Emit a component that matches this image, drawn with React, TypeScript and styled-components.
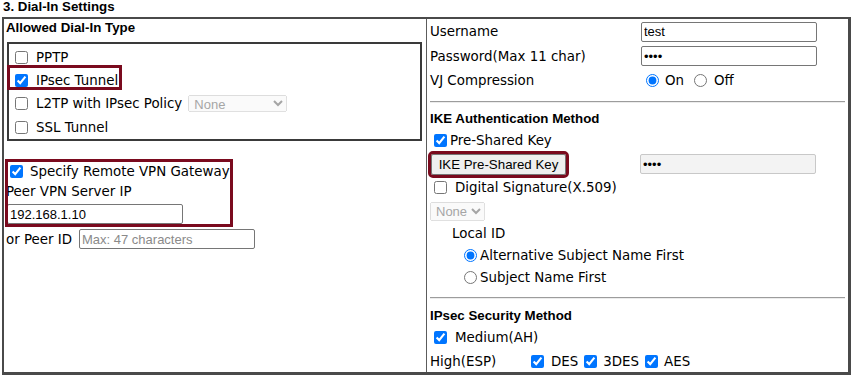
import React from 'react';
import styled, { createGlobalStyle } from 'styled-components';

const maroon = '#7a0a1e';

const GlobalStyle = createGlobalStyle`
  html, body { margin: 0; background: #fff; }
  body {
    padding: 0 2px;
    font-family: "DejaVu Sans", Verdana, sans-serif;
    font-size: 13.4px;
    color: #000;
  }
`;

const App = () => {
  return (
    <>
      <GlobalStyle />
      <Title>3. Dial-In Settings</Title>
      <Panel>
        <LeftCell>
          <Heading $indent={1}>Allowed Dial-In Type</Heading>
          <TypeBox>
            <TypeRow $h={23}>
              <CheckLabel $gap={8}>
                <Check type="checkbox" />
                PPTP
              </CheckLabel>
            </TypeRow>
            <TypeRow $h={23}>
              <Marked $gap={8}>
                <Check type="checkbox" defaultChecked />
                IPsec Tunnel
              </Marked>
            </TypeRow>
            <TypeRow $h={23}>
              <CheckLabel $gap={8}>
                <Check type="checkbox" />
                L2TP with IPsec Policy
              </CheckLabel>
              <Dropdown disabled $width={99} $height={17} $left={6}>
                <option>None</option>
              </Dropdown>
            </TypeRow>
            <TypeRow $h={24}>
              <CheckLabel $gap={8}>
                <Check type="checkbox" />
                SSL Tunnel
              </CheckLabel>
            </TypeRow>
          </TypeBox>

          <GatewayBox>
            <GatewayRow>
              <CheckLabel $gap={7}>
                <Check type="checkbox" defaultChecked />
                Specify Remote VPN Gateway
              </CheckLabel>
            </GatewayRow>
            <PlainLine $indent={1}>Peer VPN Server IP</PlainLine>
            <TextInput defaultValue="192.168.1.10" $left={2} $top={3} />
          </GatewayBox>

          <PeerRow>
            <PeerLabel>or Peer ID</PeerLabel>
            <TextInput placeholder="Max: 47 characters" />
          </PeerRow>
        </LeftCell>

        <RightCell>
          <FieldRow $h={24}>
            <span>Username</span>
            <TextInput defaultValue="test" />
          </FieldRow>
          <FieldRow $h={25}>
            <span>Password(Max 11 char)</span>
            <TextInput type="password" defaultValue="abcd" />
          </FieldRow>
          <FieldRow $h={24}>
            <span>VJ Compression</span>
            <RadioGroup>
              <RadioLabel $gap={6} $left={5}>
                <Radio type="radio" name="vj" defaultChecked />
                On
              </RadioLabel>
              <RadioLabel $gap={7} $left={10}>
                <Radio type="radio" name="vj" />
                Off
              </RadioLabel>
            </RadioGroup>
          </FieldRow>

          <Divider $top={9} />
          <Heading $top={8}>IKE Authentication Method</Heading>
          <CheckRow $h={26}>
            <CheckLabel $gap={3} $left={4}>
              <Check type="checkbox" defaultChecked />
              Pre-Shared Key
            </CheckLabel>
          </CheckRow>
          <KeyRow>
            <KeyButton type="button">IKE Pre-Shared Key</KeyButton>
            <LockedInput type="password" defaultValue="abcd" readOnly />
          </KeyRow>
          <CheckRow $h={26}>
            <CheckLabel $gap={8} $left={4}>
              <Check type="checkbox" />
              Digital Signature(X.509)
            </CheckLabel>
          </CheckRow>
          <Dropdown disabled $width={55} $height={19} $top={1}>
            <option>None</option>
          </Dropdown>
          <PlainLine $indent={22} $top={3}>Local ID</PlainLine>
          <CheckRow $h={23}>
            <RadioLabel $gap={3} $left={34}>
              <Radio type="radio" name="localid" defaultChecked />
              Alternative Subject Name First
            </RadioLabel>
          </CheckRow>
          <CheckRow $h={23}>
            <RadioLabel $gap={3} $left={34}>
              <Radio type="radio" name="localid" />
              Subject Name First
            </RadioLabel>
          </CheckRow>

          <Divider $top={8} />
          <Heading $top={9}>IPsec Security Method</Heading>
          <CheckRow $h={26}>
            <CheckLabel $gap={8} $left={4}>
              <Check type="checkbox" defaultChecked />
              Medium(AH)
            </CheckLabel>
          </CheckRow>
          <CipherRow>
            <span>High(ESP)</span>
            <CipherList>
              <CheckLabel $gap={7}>
                <Check type="checkbox" defaultChecked />
                DES
              </CheckLabel>
              <CheckLabel $gap={6} $left={6}>
                <Check type="checkbox" defaultChecked />
                3DES
              </CheckLabel>
              <CheckLabel $gap={6} $left={6}>
                <Check type="checkbox" defaultChecked />
                AES
              </CheckLabel>
            </CipherList>
          </CipherRow>
        </RightCell>
      </Panel>
    </>
  );
};

export default App;

const Title = styled.div`
  font: bold 13.3px/13px "Liberation Sans", Arial, sans-serif;
  height: 17px;
  padding-left: 1px;
`;

const Panel = styled.div`
  display: grid;
  grid-template-columns: 423px 1fr;
  grid-template-rows: minmax(0, 1fr);
  width: 849px;
  height: 358px;
  box-sizing: border-box;
  border-style: solid;
  border-color: #4a4a4a;
  border-width: 2px 3px 3px 2px;
`;

const LeftCell = styled.div`
  border-right: 1px solid #5c5c5c;
  padding: 1px 0 0 1px;
`;

const RightCell = styled.div`
  display: flex;
  flex-direction: column;
  align-items: flex-start;
  padding: 1px 3px 0 3px;
`;

const Heading = styled.div<{ $top?: number; $indent?: number }>`
  font: bold 13.3px/16px "Liberation Sans", Arial, sans-serif;
  margin-top: ${(p) => p.$top ?? 0}px;
  padding-left: ${(p) => p.$indent ?? 0}px;
`;

const TypeBox = styled.div`
  display: flex;
  flex-direction: column;
  width: 415px;
  height: 99px;
  box-sizing: border-box;
  margin: 6px 0 0 2px;
  padding-top: 2px;
  border: 2px solid #3a3a3a;
`;

const TypeRow = styled.div<{ $h: number }>`
  display: flex;
  align-items: center;
  flex-shrink: 0;
  height: ${(p) => p.$h}px;
  padding-left: 6px;
`;

const CheckLabel = styled.label<{ $gap: number; $left?: number }>`
  display: inline-flex;
  align-items: center;
  gap: ${(p) => p.$gap}px;
  margin-left: ${(p) => p.$left ?? 0}px;
  white-space: nowrap;
`;

const Marked = styled(CheckLabel)`
  height: 19px;
  box-sizing: border-box;
  margin: -6px 0 0 -5px;
  padding: 6px 1px 0 5px;
  outline: 3px solid ${maroon};
`;

const RadioLabel = styled(CheckLabel)``;

const Check = styled.input`
  width: 13px;
  height: 13px;
  margin: 0;
  flex-shrink: 0;
`;

const Radio = styled(Check)``;

const Dropdown = styled.select<{ $width: number; $height: number; $left?: number; $top?: number }>`
  width: ${(p) => p.$width}px;
  height: ${(p) => p.$height}px;
  margin: ${(p) => p.$top ?? 0}px 0 0 ${(p) => p.$left ?? 0}px;
  padding: 0 0 0 1px;
  font: 13px "Liberation Sans", Arial, sans-serif;
`;

const GatewayBox = styled.div`
  width: 228px;
  height: 68px;
  box-sizing: border-box;
  margin-top: 18px;
  padding-top: 3px;
  outline: 3px solid ${maroon};
  outline-offset: -3px;
`;

const GatewayRow = styled.div`
  display: flex;
  align-items: center;
  height: 19px;
  padding-left: 5px;
`;

const PlainLine = styled.div<{ $indent?: number; $top?: number }>`
  display: flex;
  align-items: center;
  height: 20px;
  margin-top: ${(p) => p.$top ?? 0}px;
  padding-left: ${(p) => p.$indent ?? 0}px;
  white-space: nowrap;
`;

const TextInput = styled.input<{ $left?: number; $top?: number }>`
  display: block;
  width: 176px;
  height: 20px;
  box-sizing: border-box;
  margin: ${(p) => p.$top ?? 0}px 0 0 ${(p) => p.$left ?? 0}px;
  padding: 1px 2px;
  border: 1px solid #767676;
  border-radius: 2px;
  font: 13px "Liberation Sans", Arial, sans-serif;
  color: #000;

  &::placeholder {
    color: #8a8a8a;
  }
`;

const PeerRow = styled.div`
  display: flex;
  align-items: center;
  height: 20px;
  margin-top: 2px;
`;

const PeerLabel = styled.span`
  width: 73px;
  padding-left: 1px;
`;

const FieldRow = styled.div<{ $h: number }>`
  display: grid;
  grid-template-columns: 211px 1fr;
  align-items: center;
  height: ${(p) => p.$h}px;
`;

const RadioGroup = styled.div`
  display: flex;
  align-items: center;
`;

const Divider = styled.div<{ $top: number }>`
  width: 415px;
  height: 0;
  margin-top: ${(p) => p.$top}px;
  border-top: 1px solid #9c9c9c;
  border-bottom: 1px solid #ececec;
`;

const CheckRow = styled.div<{ $h: number; $top?: number }>`
  display: flex;
  align-items: center;
  height: ${(p) => p.$h}px;
  margin-top: ${(p) => p.$top ?? 0}px;
`;

const KeyRow = styled.div`
  display: grid;
  grid-template-columns: 210px 1fr;
  align-items: center;
  height: 22px;
`;

const KeyButton = styled.button`
  width: 135px;
  height: 21px;
  margin-left: 1px;
  padding: 0;
  border: 1px solid #767676;
  border-radius: 2px;
  background: #efefef;
  font: 13.3px "Liberation Sans", Arial, sans-serif;
  color: #000;
  outline: 3px solid ${maroon};
`;

const LockedInput = styled(TextInput)`
  background: #f3f3f3;
  border-color: #c8c8c8;
`;

const CipherRow = styled.div`
  display: grid;
  grid-template-columns: 101px 1fr;
  align-items: center;
  height: 22px;
`;

const CipherList = styled.div`
  display: flex;
  align-items: center;
`;
